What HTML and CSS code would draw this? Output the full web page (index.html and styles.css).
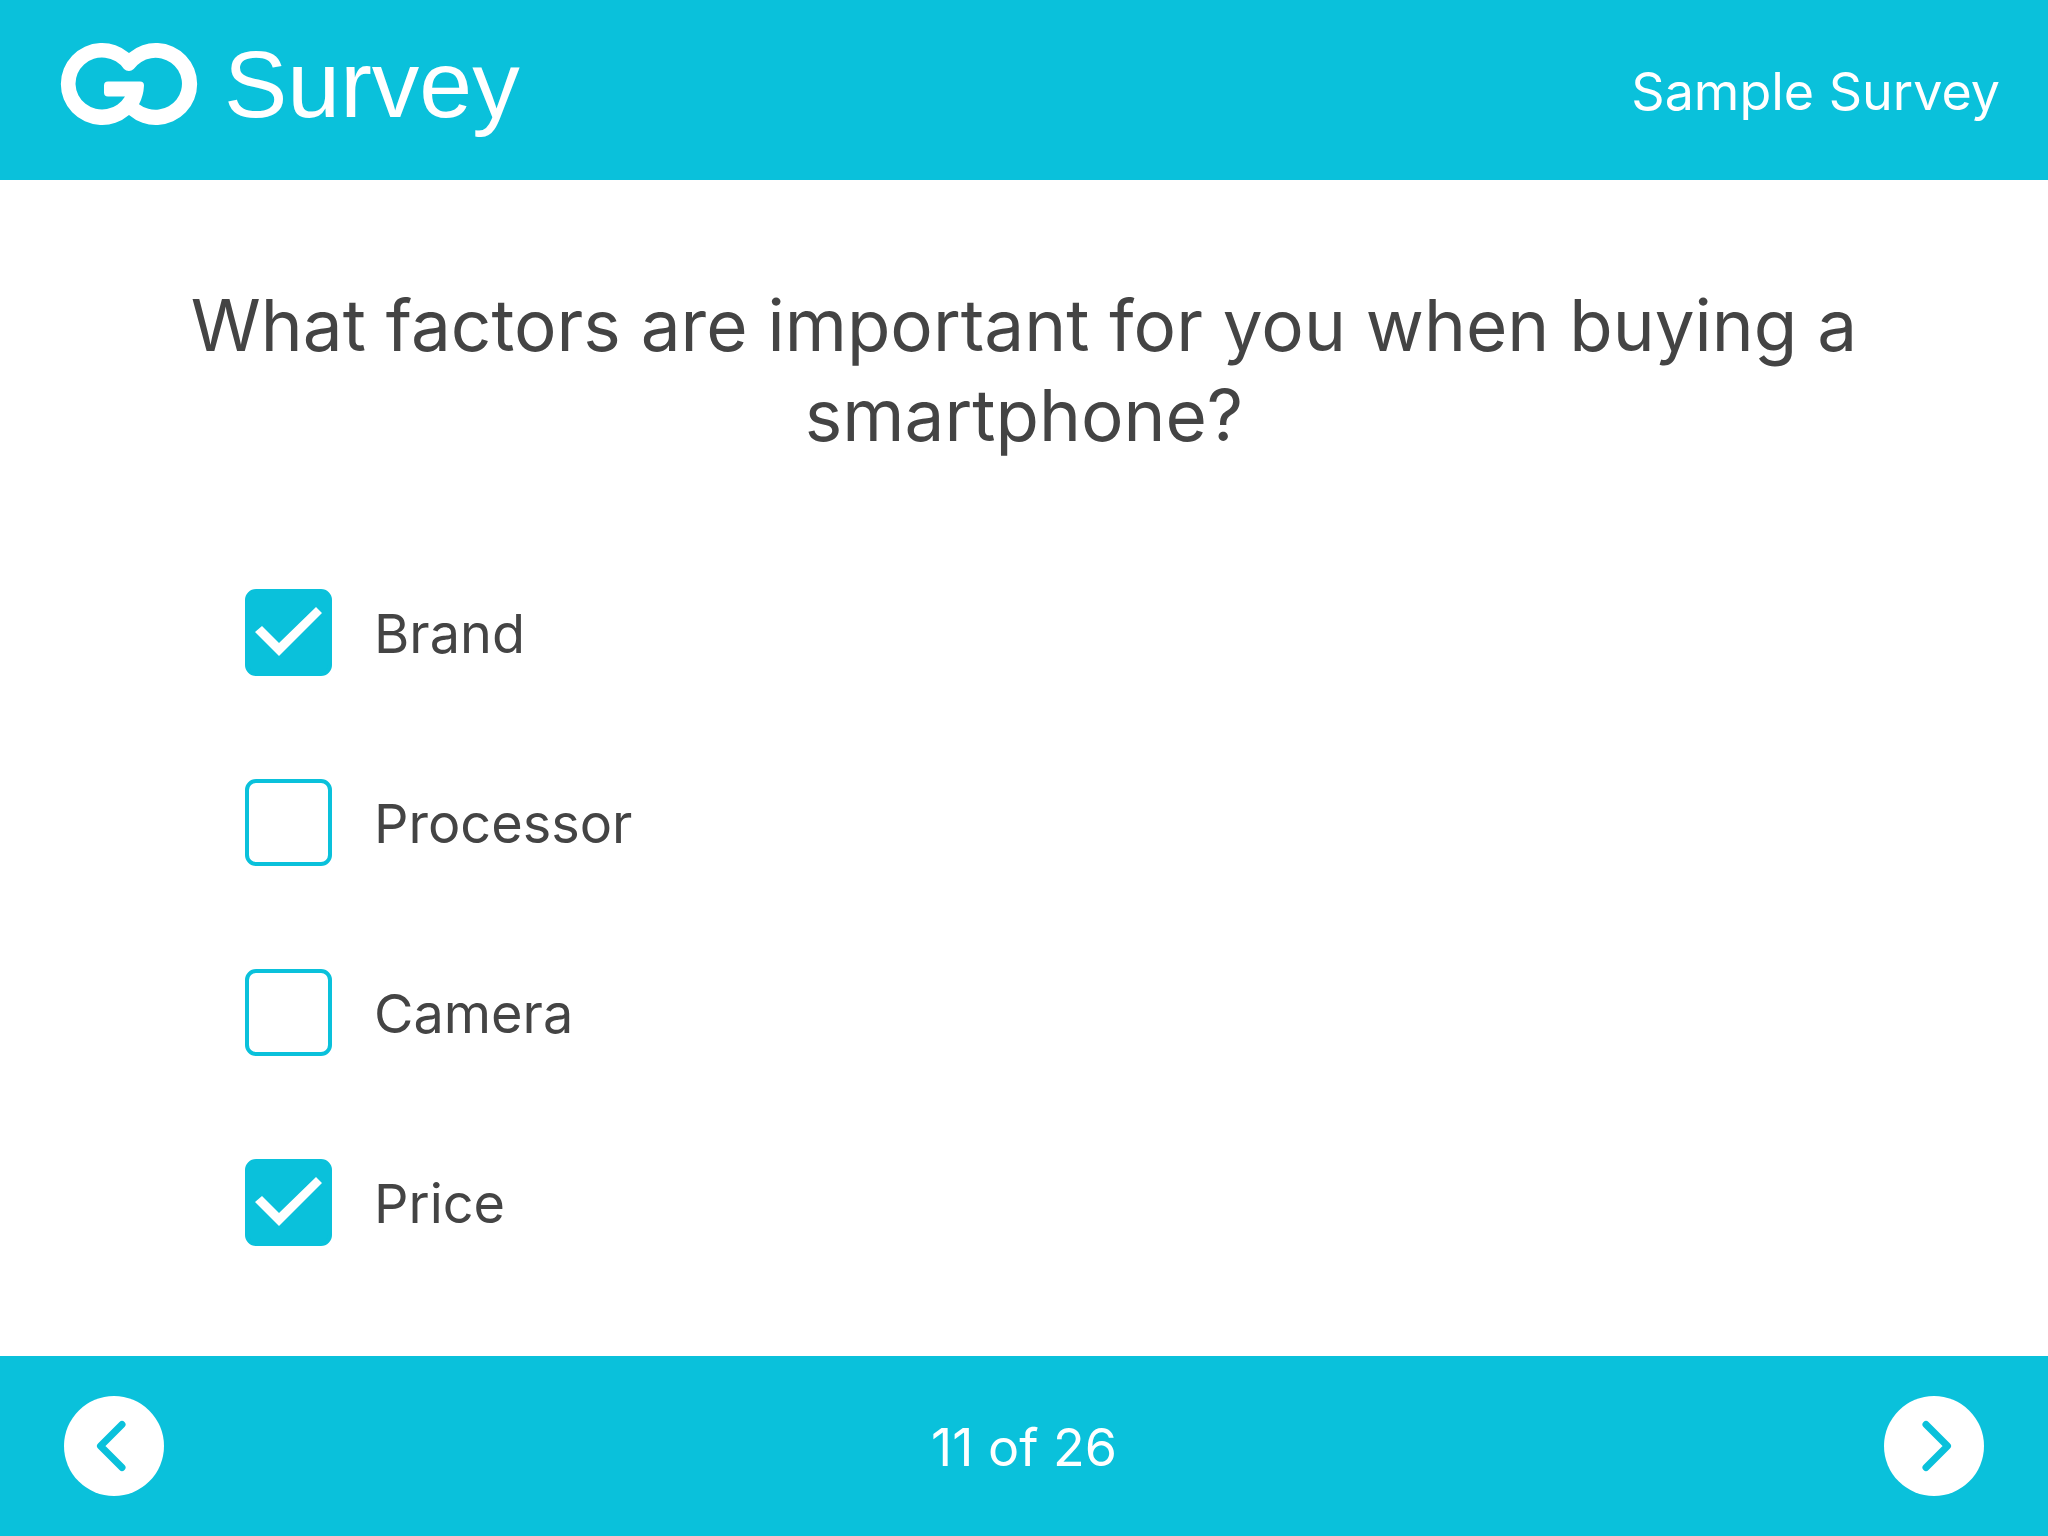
FILE: index.html
```html
<!DOCTYPE html>
<html lang="en">
<head>
    <meta charset="UTF-8">
    <meta name="viewport" content="width=device-width, initial-scale=1.0">
    <title>Sample Survey</title>
    <link rel="stylesheet" href="styles.css">
</head>
<body>
    <header class="bar header">
        <div class="brand">
            <svg class="logo" viewBox="0 0 138 82" aria-hidden="true">
                <path fill="#fff" fill-rule="evenodd" d="M69 10A41.200 41 0 1 0 69 72A41.200 41 0 1 0 69 10ZM64 26A26.500 26 0 1 0 65 53.500H48Q44 53.500 44 49.500V42.500Q44 38.500 48 38.500H80Q84 38.500 84 42.500Q83.500 53 79 61.200A26.500 26 0 1 0 73.700 26Q71.500 28 69 28Q66 28 64 26Z"/>
            </svg>
            <span class="brand-name">Survey</span>
        </div>
        <div class="title">Sample Survey</div>
    </header>
    <main class="content">
        <h1 class="question" id="question">What factors are important for you when buying a smartphone?</h1>
        <form class="options" aria-labelledby="question">
            <label class="option"><input class="check" type="checkbox" checked><span class="option-text">Brand</span></label>
            <label class="option"><input class="check" type="checkbox"><span class="option-text">Processor</span></label>
            <label class="option"><input class="check" type="checkbox"><span class="option-text">Camera</span></label>
            <label class="option"><input class="check" type="checkbox" checked><span class="option-text">Price</span></label>
        </form>
    </main>
    <footer class="bar footer">
        <button class="nav-btn" type="button" aria-label="Previous">
            <svg viewBox="0 0 100 100"><path d="M58 28.500L36.500 50L58 71.500"/></svg>
        </button>
        <div class="title">11 of 26</div>
        <button class="nav-btn" type="button" aria-label="Next">
            <svg viewBox="0 0 100 100"><path d="M42 28.500L63.500 50L42 71.500"/></svg>
        </button>
    </footer>
</body>
</html>
```
FILE: styles.css
```css
* {
    box-sizing: border-box;
}
body {
    display: flex;
    flex-direction: column;
    min-height: 100vh;
    margin: 0;
    background: #fff;
    color: #444;
    font-family: Inter, "Liberation Sans", sans-serif;
}
.bar {
    display: flex;
    justify-content: space-between;
    align-items: center;
    height: 180px;
    flex-shrink: 0;
    background: #0ac1db;
    color: #fff;
}
.header {
    padding: 0 48px 0 60px;
}
.footer {
    padding: 0 64px;
}
.brand {
    display: flex;
    align-items: center;
    gap: 26px;
    padding-bottom: 12px;
}
.logo {
    width: 138px;
    height: 82px;
}
.brand-name {
    font-family: "Liberation Sans", Arial, sans-serif;
    font-size: 95px;
    line-height: 96px;
}
.title {
    padding-top: 3px;
    font-size: 52px;
    line-height: 64px;
}
.content {
    flex: 1;
    padding: 100px 160px 0;
}
.question {
    margin: 0;
    font-size: 71px;
    font-weight: 400;
    line-height: 90px;
    text-align: center;
}
.options {
    display: flex;
    flex-direction: column;
    gap: 103px;
    padding: 129px 85px 0;
}
.option {
    display: flex;
    align-items: center;
    gap: 42px;
    align-self: flex-start;
    height: 87px;
    font-size: 54px;
    line-height: 64px;
    cursor: pointer;
}
.option-text {
    padding-top: 3px;
}
.check {
    appearance: none;
    display: grid;
    width: 87px;
    height: 87px;
    margin: 0;
    border: 4px solid #0ac1db;
    border-radius: 11px;
    background: #fff;
    cursor: pointer;
}
.check:checked {
    background: #0ac1db;
}
.check:checked::before {
    content: "";
    background: #fff;
    clip-path: polygon(6px 39px, 13px 33px, 30px 50px, 67px 14px, 73px 20px, 30px 63px);
}
.nav-btn {
    width: 100px;
    height: 100px;
    padding: 0;
    border: none;
    border-radius: 50%;
    background: #fff;
    cursor: pointer;
}
.nav-btn svg {
    display: block;
    fill: none;
    stroke: #0ac1db;
    stroke-width: 7;
    stroke-linecap: round;
    stroke-linejoin: round;
}
```
